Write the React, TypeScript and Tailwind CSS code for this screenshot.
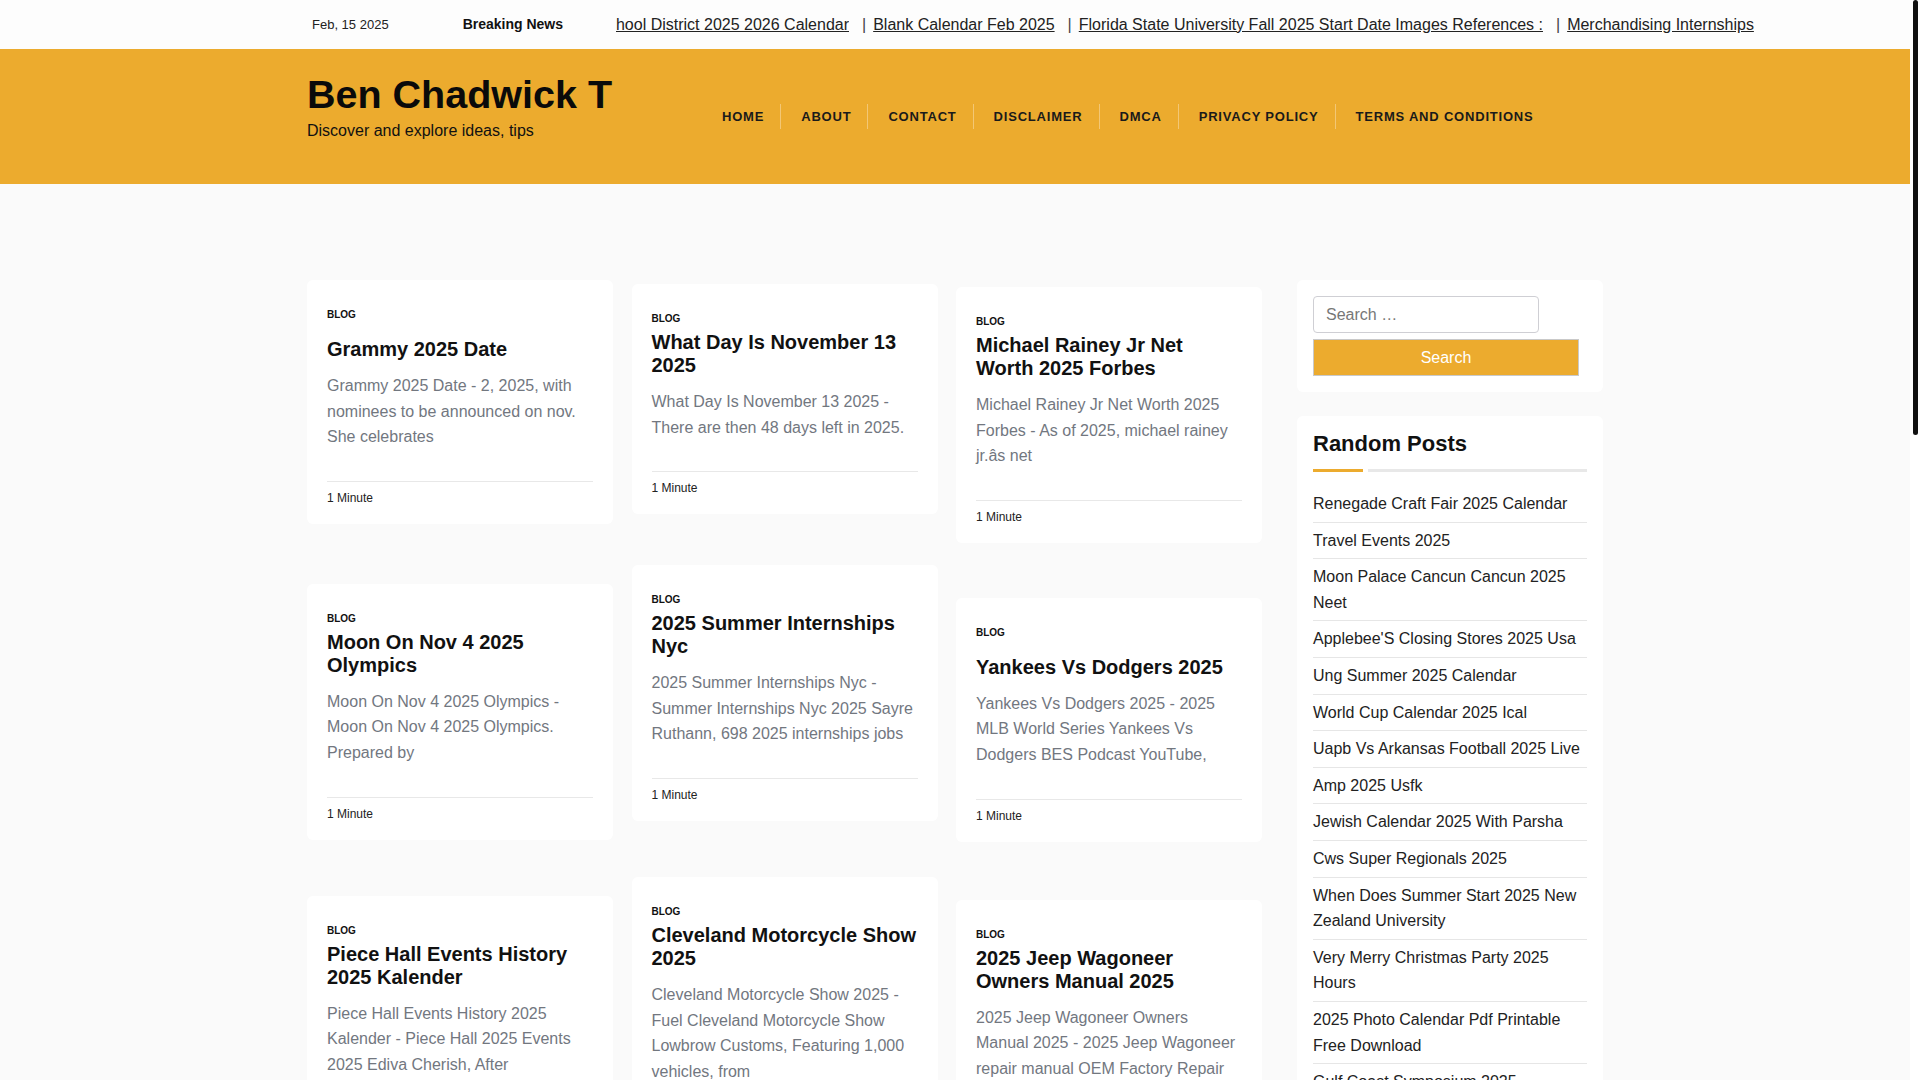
import React from 'react';

type Post = {
  title: string;
  excerpt: string;
  one?: boolean;
  gap: string;
};

const columns: Post[][] = [
  [
    {
      title: 'Grammy 2025 Date',
      excerpt: 'Grammy 2025 Date - 2, 2025, with nominees to be announced on nov. She celebrates',
      one: true,
      gap: 'mt-0',
    },
    {
      title: 'Moon On Nov 4 2025 Olympics',
      excerpt: 'Moon On Nov 4 2025 Olympics - Moon On Nov 4 2025 Olympics. Prepared by',
      gap: 'mt-[60px]',
    },
    {
      title: 'Piece Hall Events History 2025 Kalender',
      excerpt:
        'Piece Hall Events History 2025 Kalender - Piece Hall 2025 Events 2025 Ediva Cherish, After',
      gap: 'mt-[56px]',
    },
  ],
  [
    {
      title: 'What Day Is November 13 2025',
      excerpt: 'What Day Is November 13 2025 - There are then 48 days left in 2025.',
      gap: 'mt-0',
    },
    {
      title: '2025 Summer Internships Nyc',
      excerpt:
        '2025 Summer Internships Nyc - Summer Internships Nyc 2025 Sayre Ruthann, 698 2025 internships jobs',
      gap: 'mt-[51px]',
    },
    {
      title: 'Cleveland Motorcycle Show 2025',
      excerpt:
        'Cleveland Motorcycle Show 2025 - Fuel Cleveland Motorcycle Show Lowbrow Customs, Featuring 1,000 vehicles, from',
      gap: 'mt-[56px]',
    },
  ],
  [
    {
      title: 'Michael Rainey Jr Net Worth 2025 Forbes',
      excerpt: 'Michael Rainey Jr Net Worth 2025 Forbes - As of 2025, michael rainey jr.âs net',
      gap: 'mt-0',
    },
    {
      title: 'Yankees Vs Dodgers 2025',
      excerpt:
        'Yankees Vs Dodgers 2025 - 2025 MLB World Series Yankees Vs Dodgers BES Podcast YouTube,',
      one: true,
      gap: 'mt-[55px]',
    },
    {
      title: '2025 Jeep Wagoneer Owners Manual 2025',
      excerpt:
        '2025 Jeep Wagoneer Owners Manual 2025 - 2025 Jeep Wagoneer repair manual OEM Factory Repair',
      gap: 'mt-[58px]',
    },
  ],
];

const colPad = ['pt-[96px]', 'pt-[100px]', 'pt-[103px]'];

const randomPosts = [
  'Renegade Craft Fair 2025 Calendar',
  'Travel Events 2025',
  'Moon Palace Cancun Cancun 2025 Neet',
  "Applebee'S Closing Stores 2025 Usa",
  'Ung Summer 2025 Calendar',
  'World Cup Calendar 2025 Ical',
  'Uapb Vs Arkansas Football 2025 Live',
  'Amp 2025 Usfk',
  'Jewish Calendar 2025 With Parsha',
  'Cws Super Regionals 2025',
  'When Does Summer Start 2025 New Zealand University',
  'Very Merry Christmas Party 2025 Hours',
  '2025 Photo Calendar Pdf Printable Free Download',
  'Gulf Coast Symposium 2025',
];

const ticker = [
  'Blank Calendar Feb 2025',
  'Florida State University Fall 2025 Start Date Images References :',
  'Merchandising Internships',
  'Cleveland Motorcycle Show 2025',
];

const nav = ['HOME', 'ABOUT', 'CONTACT', 'DISCLAIMER', 'DMCA', 'PRIVACY POLICY', 'TERMS AND CONDITIONS'];

const Card = ({ post }: { post: Post }) => (
  <article className={`${post.gap} bg-white rounded-[6px] px-5 pt-[27px] pb-[17px]`}>
    <div className="text-[10px] leading-[15px] font-bold text-[#111]">BLOG</div>
    <h2
      className={`${post.one ? 'mt-[16px]' : 'mt-[5px]'} text-[20px] leading-[23px] font-bold text-[#111]`}
    >
      {post.title}
    </h2>
    <p className="mt-3 text-[16px] leading-[25.6px] text-[#72777f]">{post.excerpt}</p>
    <div className="mt-[31px] border-t border-[#e8e8e8] pt-[7px] text-[12px] leading-[18px] text-[#222]">
      1 Minute
    </div>
  </article>
);

export default function App() {
  return (
    <div className="flex h-screen overflow-hidden font-['Liberation_Sans',Arial,sans-serif] text-[#111]">
      <div className="min-w-0 flex-1 overflow-hidden bg-[#fafafa]">
        {/* top bar */}
        <div className="h-[49px] bg-[#fdfdfd]">
          <div className="mx-auto flex h-full w-[1296px] items-center pl-[5px] whitespace-nowrap">
            <span className="text-[13px] text-[#222]">Feb, 15 2025</span>
            <span className="ml-[74px] text-[14px] font-bold text-[#111]">Breaking News</span>
            <div className="ml-[53px] flex w-[1144px] shrink-0 overflow-hidden text-[16px] text-[#222]">
              <div className="flex w-[233px] shrink-0 justify-end overflow-hidden">
                <a href="#" className="underline">
                  School District 2025 2026 Calendar
                </a>
              </div>
              {ticker.map((t) => (
                <React.Fragment key={t}>
                  <span className="ml-[13px] mr-[7px] text-[#444]">|</span>
                  <a href="#" className="underline">
                    {t}
                  </a>
                </React.Fragment>
              ))}
            </div>
          </div>
        </div>

        {/* header */}
        <header className="h-[135px] bg-[#ecab2e]">
          <div className="mx-auto flex h-full w-[1296px]">
            <div className="w-[395px] shrink-0 pt-[21px]">
              <h1 className="text-[39.5px] leading-[48px] font-bold text-[#0a0a0a]">Ben Chadwick T</h1>
              <p className="text-[16px] leading-[25px] text-[#111]">Discover and explore ideas, tips</p>
            </div>
            <nav className="flex items-center">
              {nav.map((n, i) => (
                <a
                  key={n}
                  href="#"
                  className={`flex h-[25px] items-center pl-5 pr-4 text-[13px] font-bold tracking-[0.8px] text-[#1a1a1a] ${
                    i < nav.length - 1 ? 'border-r border-[#f3c775]' : ''
                  }`}
                >
                  {n}
                </a>
              ))}
            </nav>
          </div>
        </header>

        {/* content */}
        <main className="mx-auto flex w-[1296px] items-start pb-[80px]">
          <div className="flex gap-[18.5px]">
            {columns.map((col, ci) => (
              <div key={ci} className={`flex w-[306px] flex-col ${colPad[ci]}`}>
                {col.map((p) => (
                  <Card key={p.title} post={p} />
                ))}
              </div>
            ))}
          </div>

          <aside className="ml-[35px] w-[306px] pt-[96px]">
            <div className="rounded-[6px] bg-white p-4">
              <input
                type="search"
                placeholder="Search …"
                className="h-[37px] w-[226px] rounded-[4px] border border-[#cfcfd4] bg-white px-3 text-[16px] text-[#222] outline-none placeholder:text-[#777]"
              />
              <button className="mt-[6px] h-[37px] w-[266px] border border-[#c9c9c9] bg-[#ecab2e] text-[16px] text-white">
                Search
              </button>
            </div>

            <div className="mt-6 rounded-[6px] bg-white px-4 pt-[15px] pb-4">
              <h3 className="text-[22px] leading-[26px] font-bold text-[#111]">Random Posts</h3>
              <div className="mt-[12px] flex gap-[5px]">
                <span className="h-[3px] w-[50px] bg-[#ecab2e]" />
                <span className="h-[3px] flex-1 bg-[#e8e8e8]" />
              </div>
              <ul className="mt-[14px]">
                {randomPosts.map((r) => (
                  <li
                    key={r}
                    className="border-b border-[#e6e6e6] py-[5px] text-[16px] leading-[25.6px] text-[#222]"
                  >
                    <a href="#">{r}</a>
                  </li>
                ))}
              </ul>
            </div>
          </aside>
        </main>
      </div>

      {/* page scrollbar */}
      <div className="w-[10px] shrink-0 bg-white">
        <div className="ml-[3px] h-[435px] w-[5px] rounded-full bg-[#111]" />
      </div>
    </div>
  );
}
